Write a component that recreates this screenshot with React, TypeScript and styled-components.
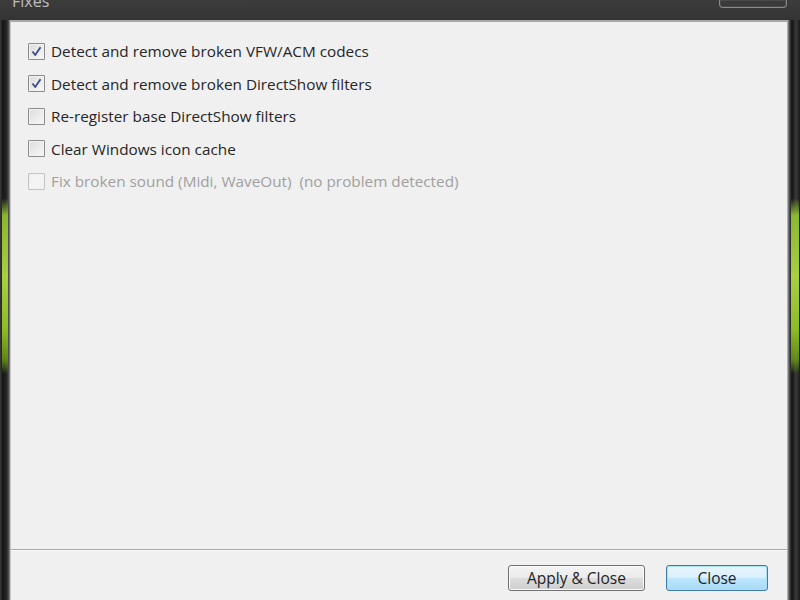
import React from "react";
import styled, { createGlobalStyle } from "styled-components";

const Global = createGlobalStyle`
  *, *::before, *::after { box-sizing: border-box; }
  html, body { margin: 0; padding: 0; width: 800px; height: 600px; overflow: hidden; background: #2b2b2b; }
  #root { width: 800px; height: 600px; }
`;

const Window = styled.div`
  width: 800px;
  height: 600px;
  display: grid;
  grid-template-columns: 10px 1fr 12px;
  grid-template-rows: 20px 1fr;
  background: #262626;
  font-family: "Open Sans", "Noto Sans", sans-serif;
`;

const TitleBar = styled.div`
  grid-column: 1 / 4;
  display: flex;
  align-items: flex-end;
  justify-content: space-between;
  padding: 0 13px 0 12px;
  background: linear-gradient(#3c3c3c, #343434);
  overflow: hidden;
`;

const Title = styled.div`
  color: #bdbdbd;
  font-size: 16px;
  line-height: 16px;
  margin-bottom: 11px;
`;

const ControlBox = styled.div`
  align-self: flex-start;
  width: 68px;
  height: 8px;
  border: 1px solid #8a8a8a;
  border-top: none;
  border-radius: 0 0 4px 4px;
  box-shadow: inset 0 0 0 1px #4a4a4a;
`;

const Frame = styled.div<{ $side: "left" | "right" }>`
  position: relative;
  background: ${(p) =>
    p.$side === "left"
      ? "linear-gradient(90deg, #3a3a3a 0px, #141414 3px, #2a2a2a 7px, #5a5a5a 9px, #9a9a9a 10px)"
      : "linear-gradient(90deg, #8a8a8a 0px, #3a3a3a 2px, #121212 4px, #3a3a3a 8px, #1a1a1a 12px)"};
`;

const Glow = styled.div<{ $side: "left" | "right" }>`
  position: absolute;
  top: 178px;
  height: 176px;
  left: ${(p) => (p.$side === "left" ? "2px" : "3px")};
  width: ${(p) => (p.$side === "left" ? "6px" : "8px")};
  border-radius: 3px;
  background: linear-gradient(
    180deg,
    rgba(140, 190, 40, 0) 0%,
    rgba(150, 200, 50, 0.9) 10%,
    #a8d040 45%,
    #8cbc24 75%,
    rgba(110, 160, 20, 0.8) 92%,
    rgba(110, 160, 20, 0) 100%
  );
  filter: blur(0.6px);
`;

const Client = styled.div`
  display: flex;
  flex-direction: column;
  background: #f0f0f0;
  border-top: 2px solid #a8a8a8;
  border-left: 1px solid #c8c8c8;
  border-right: 1px solid #b0b0b0;
`;

const OptionList = styled.div`
  flex: 1;
  display: flex;
  flex-direction: column;
  padding: 13px 0 0 17px;
`;

const Row = styled.label<{ $disabled?: boolean }>`
  display: flex;
  align-items: center;
  height: 32.5px;
  gap: 6px;
  font-size: 15.3px;
  color: ${(p) => (p.$disabled ? "#a0a0a0" : "#262626")};
  white-space: nowrap;
`;

const Box = styled.span<{ $disabled?: boolean }>`
  width: 17px;
  height: 17px;
  border: 1px solid ${(p) => (p.$disabled ? "#c4c4c4" : "#8c8c8c")};
  border-radius: 1px;
  background: ${(p) =>
    p.$disabled ? "#f4f4f4" : "linear-gradient(135deg, #dcdcdc, #f8f8f8)"};
  box-shadow: inset 0 0 0 1px ${(p) => (p.$disabled ? "#f0f0f0" : "#f2f2f2")};
  display: flex;
  align-items: center;
  justify-content: center;
  flex: none;
`;

const Separator = styled.div`
  height: 2px;
  background: #a9a9a9;
  border-bottom: 1px solid #fafafa;
`;

const ButtonBar = styled.div`
  height: 49px;
  display: flex;
  justify-content: flex-end;
  align-items: flex-start;
  padding: 14px 19px 0 0;
  gap: 21px;
`;

const Button = styled.button<{ $default?: boolean; $w: number }>`
  width: ${(p) => p.$w}px;
  height: 26px;
  font-family: "Open Sans", "Noto Sans", sans-serif;
  font-size: 15.5px;
  color: #222;
  padding: 0;
  border-radius: 3px;
  border: 1px solid ${(p) => (p.$default ? "#3d7bad" : "#707070")};
  background: ${(p) =>
    p.$default
      ? "linear-gradient(#e8f5fc 0%, #d9f0fc 48%, #bee6fd 52%, #a7d9f5 100%)"
      : "linear-gradient(#f4f4f4 0%, #ebebeb 48%, #dddddd 52%, #cfcfcf 100%)"};
  box-shadow: inset 0 0 0 1px ${(p) => (p.$default ? "#a8e0f8" : "#fbfbfb")};
  line-height: 22px;
`;

function Check() {
  return (
    <svg width="11" height="11" viewBox="0 0 11 11">
      <path
        d="M1.5 5.5 L4.2 9 L9.5 1.2"
        fill="none"
        stroke="#3b4a8c"
        strokeWidth="1.8"
        strokeLinejoin="round"
      />
    </svg>
  );
}

const options = [
  { label: "Detect and remove broken VFW/ACM codecs", checked: true },
  { label: "Detect and remove broken DirectShow filters", checked: true },
  { label: "Re-register base DirectShow filters", checked: false },
  { label: "Clear Windows icon cache", checked: false },
  {
    label: "Fix broken sound (Midi, WaveOut)\u00a0\u00a0(no problem detected)",
    checked: false,
    disabled: true,
  },
];

export default function App() {
  return (
    <>
      <Global />
      <Window>
        <TitleBar>
          <Title>Fixes</Title>
          <ControlBox />
        </TitleBar>
        <Frame $side="left">
          <Glow $side="left" />
        </Frame>
        <Client>
          <OptionList>
            {options.map((o) => (
              <Row key={o.label} $disabled={o.disabled}>
                <Box $disabled={o.disabled}>{o.checked && <Check />}</Box>
                {o.label}
              </Row>
            ))}
          </OptionList>
          <Separator />
          <ButtonBar>
            <Button $w={137}>Apply &amp; Close</Button>
            <Button $w={102} $default>
              Close
            </Button>
          </ButtonBar>
        </Client>
        <Frame $side="right">
          <Glow $side="right" />
        </Frame>
      </Window>
    </>
  );
}
